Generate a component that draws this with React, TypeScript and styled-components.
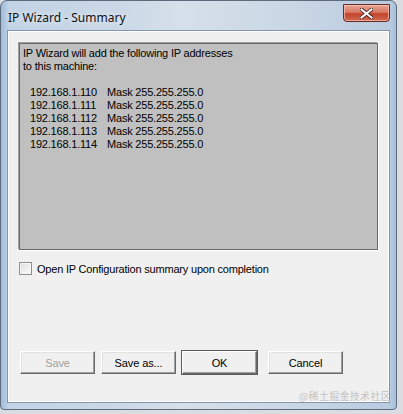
import React from 'react'
import styled, { createGlobalStyle } from 'styled-components'

const GlobalStyle = createGlobalStyle`
  html, body {
    margin: 0;
    padding: 0;
    background: #d9dde2;
  }
  body {
    width: 403px;
    height: 414px;
    overflow: hidden;
  }
`

const addresses = [
  '192.168.1.110',
  '192.168.1.111',
  '192.168.1.112',
  '192.168.1.113',
  '192.168.1.114',
]

export default function App() {
  return (
    <>
      <GlobalStyle />
      <Window>
        <TitleBar>
          <Title>IP Wizard - Summary</Title>
          <CloseButton aria-label="Close">
            <svg width="13" height="11" viewBox="0 0 13 11">
              <path
                d="M1.5 1.5 L11.5 9.5 M11.5 1.5 L1.5 9.5"
                stroke="#3a1a1a"
                strokeWidth="3.6"
                strokeLinecap="square"
              />
              <path
                d="M1.5 1.5 L11.5 9.5 M11.5 1.5 L1.5 9.5"
                stroke="#ffffff"
                strokeWidth="2"
                strokeLinecap="square"
              />
            </svg>
          </CloseButton>
        </TitleBar>
        <Client>
          <SummaryBox>
            <Line>IP Wizard will add the following IP addresses</Line>
            <Line>to this machine:</Line>
            <Line>&nbsp;</Line>
            {addresses.map((ip) => (
              <AddressRow key={ip}>
                <Ip>{ip}</Ip>
                <span>Mask 255.255.255.0</span>
              </AddressRow>
            ))}
          </SummaryBox>
          <CheckRow>
            <CheckBox />
            <span>Open IP Configuration summary upon completion</span>
          </CheckRow>
          <ButtonRow>
            <Button disabled>Save</Button>
            <Button>Save as...</Button>
            <Button $default>OK</Button>
            <Button $gap>Cancel</Button>
          </ButtonRow>
        </Client>
        <Watermark>@稀土掘金技术社区</Watermark>
      </Window>
    </>
  )
}

const Window = styled.div`
  position: relative;
  box-sizing: border-box;
  width: 397px;
  height: 410px;
  display: flex;
  flex-direction: column;
  padding: 0 6px 6px 6px;
  border: 1px solid #5d6b7a;
  border-radius: 7px 7px 4px 4px;
  background: linear-gradient(
    90deg,
    #9fbbdc 0px,
    #c2d3e6 8px,
    #cbd8e6 120px,
    #d6e0ea 180px,
    #c9d6e4 300px,
    #b9cbe0 389px,
    #9fbbdc 397px
  );
`

const TitleBar = styled.div`
  height: 29px;
  display: flex;
  align-items: flex-start;
  justify-content: space-between;
`

const Title = styled.div`
  margin-top: 8px;
  margin-left: 1px;
  font-family: 'Noto Sans', 'Open Sans', sans-serif;
  font-size: 12px;
  color: #111;
  text-shadow: 0 0 6px rgba(255, 255, 255, 0.9);
`

const CloseButton = styled.div`
  box-sizing: border-box;
  width: 47px;
  height: 18px;
  margin-top: 3px;
  display: flex;
  align-items: center;
  justify-content: center;
  border: 1px solid #6b2a22;
  border-radius: 0 0 4px 4px;
  background: linear-gradient(
    180deg,
    #e8a394 0%,
    #d97a66 45%,
    #c4442c 55%,
    #cf6a4f 100%
  );
  box-shadow: inset 0 0 0 1px rgba(255, 210, 200, 0.6);
`

const Client = styled.div`
  flex: 1;
  display: flex;
  flex-direction: column;
  padding: 12px 11px 0 11px;
  background: #f0f0f0;
  border: 1px solid #8196ad;
  box-shadow: inset 0 0 0 1px #ffffff;
  font-family: 'Liberation Sans', Arial, sans-serif;
  font-size: 11px;
  letter-spacing: -0.2px;
  color: #000;
`

const SummaryBox = styled.div`
  box-sizing: border-box;
  height: 207px;
  padding: 3px 3px;
  background: #c0c0c0;
  border: 1px solid #696969;
  box-shadow: -1px -1px 0 #a0a0a0, 1px 1px 0 #ffffff;
`

const Line = styled.div`
  height: 13px;
  line-height: 13px;
  white-space: pre;
`

const AddressRow = styled.div`
  display: flex;
  height: 13px;
  line-height: 13px;
  padding-left: 7px;
`

const Ip = styled.span`
  width: 77px;
`

const CheckRow = styled.div`
  display: flex;
  align-items: center;
  gap: 5px;
  margin-top: 12px;
  height: 13px;
`

const CheckBox = styled.span`
  box-sizing: border-box;
  width: 13px;
  height: 13px;
  border: 1px solid #8e8f8f;
  background: linear-gradient(135deg, #dcdcdc, #ffffff);
  box-shadow: inset 0 0 0 1px #f4f4f4;
`

const ButtonRow = styled.div`
  display: flex;
  gap: 6px;
  margin-top: 76px;
  padding-left: 1px;
`

const Button = styled.button<{ $default?: boolean; $gap?: boolean }>`
  box-sizing: border-box;
  width: 75px;
  height: 23px;
  padding: 0;
  margin-left: ${(p) => (p.$gap ? '5px' : '0')};
  font-family: 'Liberation Sans', Arial, sans-serif;
  font-size: 11px;
  letter-spacing: -0.1px;
  color: #000;
  background: #f0f0f0;
  border: 1px solid;
  border-color: #ffffff #696969 #696969 #ffffff;
  box-shadow: ${(p) =>
    p.$default
      ? '0 0 0 1px #5a5a5a, inset -1px -1px 0 #a0a0a0'
      : 'inset -1px -1px 0 #a0a0a0, inset 1px 1px 0 #e3e3e3'};
  &:disabled {
    color: #a0a0a0;
  }
`

const Watermark = styled.div`
  position: absolute;
  right: 5px;
  bottom: 6px;
  font-family: 'Noto Sans CJK SC', sans-serif;
  font-size: 10px;
  color: #c4c4c4;
  letter-spacing: 0.3px;
`
